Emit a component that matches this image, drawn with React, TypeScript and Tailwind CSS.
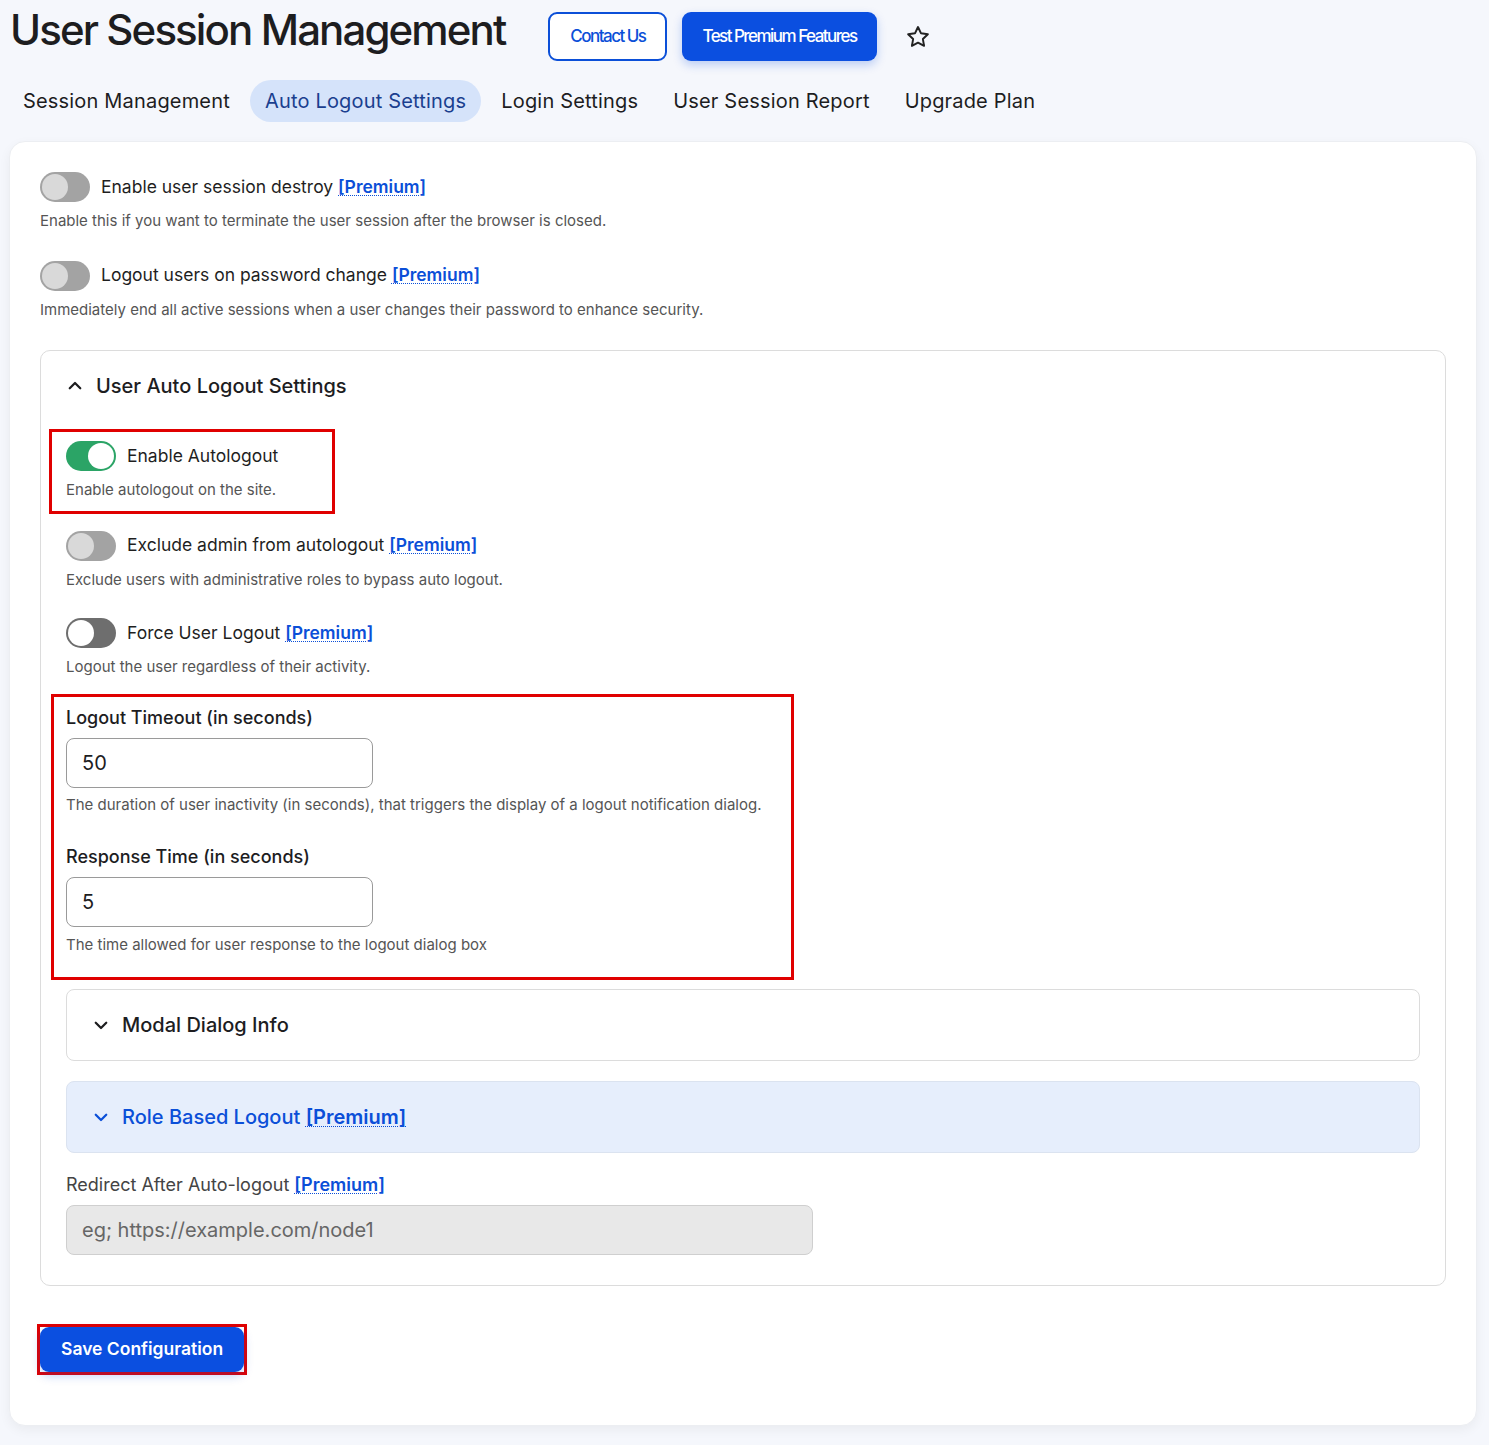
import React from "react";

const FONT = { fontFamily: "Inter, 'Noto Sans', sans-serif" };

const tabs = [
  { label: "Session Management", active: false },
  { label: "Auto Logout Settings", active: true },
  { label: "Login Settings", active: false },
  { label: "User Session Report", active: false },
  { label: "Upgrade Plan", active: false },
];

function Premium() {
  return (
    <a
      href="#"
      className="font-semibold text-[#0b4fd8] underline decoration-dotted decoration-1 underline-offset-2"
    >
      [Premium]
    </a>
  );
}

type ToggleKind = "off" | "on" | "dark";

function Toggle({ kind }: { kind: ToggleKind }) {
  if (kind === "on") {
    return (
      <span className="flex h-[30px] w-[50px] shrink-0 items-center justify-end rounded-full bg-[#2ba466] px-[2px]">
        <span className="h-[26px] w-[26px] rounded-full bg-white" />
      </span>
    );
  }
  if (kind === "dark") {
    return (
      <span className="flex h-[30px] w-[50px] shrink-0 items-center rounded-full bg-[#6e6e6e] px-[2px]">
        <span className="h-[26px] w-[26px] rounded-full bg-white" />
      </span>
    );
  }
  return (
    <span className="flex h-[30px] w-[50px] shrink-0 items-center rounded-full bg-[#a3a3a3] px-[2px]">
      <span className="h-[26px] w-[26px] rounded-full bg-[#d9d9d9]" />
    </span>
  );
}

function ToggleRow({
  kind,
  label,
  premium,
  desc,
}: {
  kind: ToggleKind;
  label: string;
  premium?: boolean;
  desc: string;
}) {
  return (
    <div>
      <div className="flex items-center gap-[11px]">
        <Toggle kind={kind} />
        <span className="text-[17.5px] text-[#1f1f1f]">
          {label} {premium && <Premium />}
        </span>
      </div>
      <p className="mt-[8px] text-[15px] text-[#555]">{desc}</p>
    </div>
  );
}

function ChevronUp() {
  return (
    <svg className="h-[18px] w-[18px]" viewBox="0 0 24 24" fill="none" stroke="currentColor" strokeWidth={3} strokeLinecap="round" strokeLinejoin="round">
      <path d="M5 15l7-7 7 7" />
    </svg>
  );
}

function ChevronDown() {
  return (
    <svg className="h-[18px] w-[18px]" viewBox="0 0 24 24" fill="none" stroke="currentColor" strokeWidth={3} strokeLinecap="round" strokeLinejoin="round">
      <path d="M5 9l7 7 7-7" />
    </svg>
  );
}

function Star() {
  return (
    <svg className="h-[26px] w-[26px]" viewBox="0 0 24 24" fill="none" stroke="#222" strokeWidth={1.8} strokeLinejoin="round">
      <path d="M12 2.8l2.8 5.8 6.3.9-4.6 4.4 1.1 6.3L12 17.2l-5.6 3 1.1-6.3-4.6-4.4 6.3-.9z" />
    </svg>
  );
}

export default function App() {
  return (
    <div className="min-h-[1445px] bg-[#f5f7fc] pb-[20px]" style={FONT}>
      {/* Header */}
      <div className="flex items-center pl-[10px] pt-[12px]">
        <h1 className="-mt-[14px] text-[42px] font-medium leading-[48px] tracking-[-0.045em] text-[#1d1d1f]">
          User Session Management
        </h1>
        <button className="ml-[43px] h-[49px] rounded-[9px] border-2 border-[#0b4fd8] bg-white px-[20px] text-[17px] font-medium tracking-[-0.09em] text-[#0b4fd8]">
          Contact Us
        </button>
        <button className="ml-[15px] h-[49px] rounded-[9px] bg-[#0b4fe0] px-[20px] text-[17px] font-medium tracking-[-0.09em] text-white shadow-[0_4px_10px_rgba(11,79,224,0.25)]">
          Test Premium Features
        </button>
        <span className="ml-[28px]">
          <Star />
        </span>
      </div>

      {/* Tabs */}
      <nav className="mt-[19px] flex items-center gap-[5px] pl-[8px]">
        {tabs.map((t) => (
          <a
            key={t.label}
            href="#"
            className={
              t.active
                ? "rounded-full bg-[#d5e3fa] px-[15px] py-[6px] text-[20px] tracking-[0.009em] text-[#1b3f8f]"
                : "px-[15px] py-[6px] text-[20px] tracking-[0.009em] text-[#1d1d1f]"
            }
          >
            {t.label}
          </a>
        ))}
      </nav>

      {/* Card */}
      <div className="ml-[9px] mr-[12px] mt-[19px] rounded-[16px] border border-[#eceef2] bg-white px-[30px] pb-[50px] pt-[30px] shadow-[0_4px_12px_rgba(0,0,0,0.05)]">
        <div className="flex flex-col gap-[28px]">
          <ToggleRow
            kind="off"
            label="Enable user session destroy"
            premium
            desc="Enable this if you want to terminate the user session after the browser is closed."
          />
          <ToggleRow
            kind="off"
            label="Logout users on password change"
            premium
            desc="Immediately end all active sessions when a user changes their password to enhance security."
          />
        </div>

        {/* Inner settings box */}
        <div className="mt-[29px] rounded-[10px] border border-[#dcdcdc] pb-[30px]">
          <div className="flex items-center gap-[12px] pl-[25px] pt-[20px] text-[#1d1d1f]">
            <ChevronUp />
            <span className="text-[20px] font-medium">User Auto Logout Settings</span>
          </div>

          <div className="px-[25px]">
            <div className="-ml-[17px] mt-[28px] w-[286px] border-[3px] border-[#e00000] pb-[9px] pl-[14px] pt-[9px]">
              <ToggleRow kind="on" label="Enable Autologout" desc="Enable autologout on the site." />
            </div>

            <div className="mt-[17px] flex flex-col gap-[27px]">
              <ToggleRow
                kind="off"
                label="Exclude admin from autologout"
                premium
                desc="Exclude users with administrative roles to bypass auto logout."
              />
              <ToggleRow
                kind="dark"
                label="Force User Logout"
                premium
                desc="Logout the user regardless of their activity."
              />
            </div>

            <div className="-ml-[15px] mt-[15px] w-[743px] border-[3px] border-[#e00000] pb-[20px] pl-[12px] pt-[7px]">
              <label className="block text-[18px] font-medium text-[#1d1d1f]">Logout Timeout (in seconds)</label>
              <input
                defaultValue="50"
                className="mt-[7px] block h-[50px] w-[307px] rounded-[8px] border border-[#9a9a9a] bg-white px-[15px] text-[20px] text-[#1d1d1f] outline-none"
              />
              <p className="mt-[6px] text-[15px] text-[#555]">
                The duration of user inactivity (in seconds), that triggers the display of a logout notification dialog.
              </p>

              <label className="mt-[27px] block text-[18px] font-medium text-[#1d1d1f]">Response Time (in seconds)</label>
              <input
                defaultValue="5"
                className="mt-[7px] block h-[50px] w-[307px] rounded-[8px] border border-[#9a9a9a] bg-white px-[15px] text-[20px] text-[#1d1d1f] outline-none"
              />
              <p className="mt-[7px] text-[15px] text-[#555]">
                The time allowed for user response to the logout dialog box
              </p>
            </div>

            <div className="mt-[9px] flex h-[72px] items-center gap-[12px] rounded-[8px] border border-[#dcdcdc] pl-[25px] text-[#1d1d1f]">
              <ChevronDown />
              <span className="text-[20px] font-medium">Modal Dialog Info</span>
            </div>

            <div className="mt-[20px] flex h-[72px] items-center gap-[12px] rounded-[8px] border border-[#dbe3f0] bg-[#e6eefc] pl-[25px] text-[#0b4fd8]">
              <ChevronDown />
              <span className="text-[20px] font-medium">
                Role Based Logout <Premium />
              </span>
            </div>

            <label className="mt-[18px] block text-[18px] text-[#444]">
              Redirect After Auto-logout <Premium />
            </label>
            <input
              disabled
              placeholder="eg; https://example.com/node1"
              className="mt-[7px] block h-[50px] w-[747px] rounded-[8px] border border-[#cfcfcf] bg-[#e8e8e8] px-[15px] text-[20px] text-[#555] placeholder:text-[#666] outline-none"
            />
          </div>
        </div>

        <div className="-ml-[3px] mt-[38px] inline-block border-[3px] border-[#e00000]">
          <button className="h-[45px] rounded-[9px] bg-[#0b4fe0] px-[21px] text-[17.5px] font-semibold text-white shadow-[0_4px_10px_rgba(11,79,224,0.25)]">
            Save Configuration
          </button>
        </div>
      </div>
    </div>
  );
}
